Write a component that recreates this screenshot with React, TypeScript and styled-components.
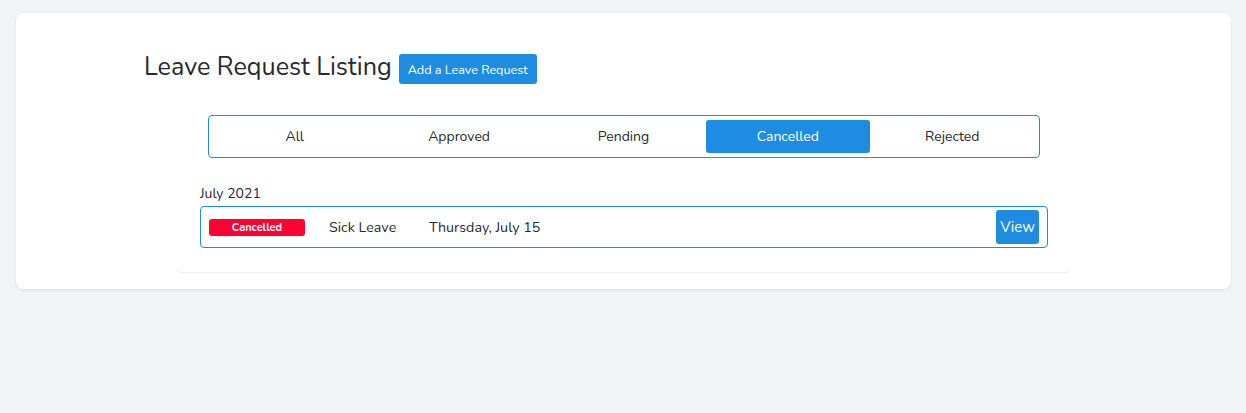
import styled, { createGlobalStyle } from 'styled-components';

const GlobalStyle = createGlobalStyle`
  html, body {
    margin: 0;
    padding: 0;
    background: #f2f3f5;
    font-family: 'Nunito', Lato, 'Noto Sans', sans-serif;
    color: #212529;
  }
`;

const BLUE = '#1e8ce0';

const Page = styled.div`
  padding: 13px 15px 0 16px;
  min-height: 100vh;
  box-sizing: border-box;
`;

const Card = styled.div`
  background: #fff;
  border-radius: 8px;
  box-shadow: 0 1px 3px rgba(0, 0, 0, 0.08);
  padding: 37px 0 17px;
`;

const Header = styled.div`
  display: flex;
  align-items: center;
  gap: 7px;
  padding-left: 128px;
`;

const Title = styled.h1`
  margin: 0;
  font-size: 25.2px;
  font-weight: 400;
  color: #262a2e;
`;

const PrimaryButton = styled.button`
  background: ${BLUE};
  color: #fff;
  border: none;
  border-radius: 3px;
  font-family: inherit;
  font-size: 12.6px;
  height: 30px;
  padding: 0 9px;
  margin-top: 4px;
  cursor: pointer;
`;

const Tabs = styled.div`
  display: grid;
  grid-template-columns: repeat(5, 1fr);
  width: 832px;
  box-sizing: border-box;
  margin: 31px auto 0;
  padding: 4px;
  border: 1px solid ${BLUE};
  border-radius: 4px;
`;

const Tab = styled.div<{ active?: boolean }>`
  height: 33px;
  display: flex;
  align-items: center;
  justify-content: center;
  border-radius: 3px;
  font-size: 14px;
  background: ${(p) => (p.active ? BLUE : 'transparent')};
  color: ${(p) => (p.active ? '#fff' : '#25292d')};
`;

const List = styled.div`
  width: 895px;
  margin: 0 auto;
  padding: 26px 23px 24px 24px;
  box-sizing: border-box;
  border-radius: 0 0 6px 6px;
  box-shadow: 0 1px 1px rgba(0, 0, 0, 0.07);
`;

const Month = styled.div`
  font-size: 14px;
  color: #25292d;
  margin-bottom: 3px;
`;

const Row = styled.div`
  display: flex;
  align-items: center;
  border: 1px solid ${BLUE};
  border-radius: 4px;
  padding: 3px 8px;
`;

const Badge = styled.span`
  width: 96px;
  height: 17px;
  background: #ff0033;
  color: #fff;
  border-radius: 3px;
  font-size: 11px;
  font-weight: 700;
  display: flex;
  align-items: center;
  justify-content: center;
`;

const Cell = styled.span<{ width?: number }>`
  font-size: 14.3px;
  color: #25292d;
  width: ${(p) => (p.width ? `${p.width}px` : 'auto')};
`;

const ViewButton = styled.button`
  margin-left: auto;
  background: ${BLUE};
  color: #fff;
  border: none;
  border-radius: 3px;
  font-family: inherit;
  font-size: 15px;
  height: 34px;
  width: 43px;
  padding: 0;
  cursor: pointer;
`;

const tabs = ['All', 'Approved', 'Pending', 'Cancelled', 'Rejected'];

export default function App() {
  return (
    <>
      <GlobalStyle />
      <Page>
        <Card>
          <Header>
            <Title>Leave Request Listing</Title>
            <PrimaryButton>Add a Leave Request</PrimaryButton>
          </Header>
          <Tabs>
            {tabs.map((t) => (
              <Tab key={t} active={t === 'Cancelled'}>
                {t}
              </Tab>
            ))}
          </Tabs>
          <List>
            <Month>July 2021</Month>
            <Row>
              <Badge>Cancelled</Badge>
              <Cell style={{ marginLeft: 24 }} width={100}>
                Sick Leave
              </Cell>
              <Cell>Thursday, July 15</Cell>
              <ViewButton>View</ViewButton>
            </Row>
          </List>
        </Card>
      </Page>
    </>
  );
}
